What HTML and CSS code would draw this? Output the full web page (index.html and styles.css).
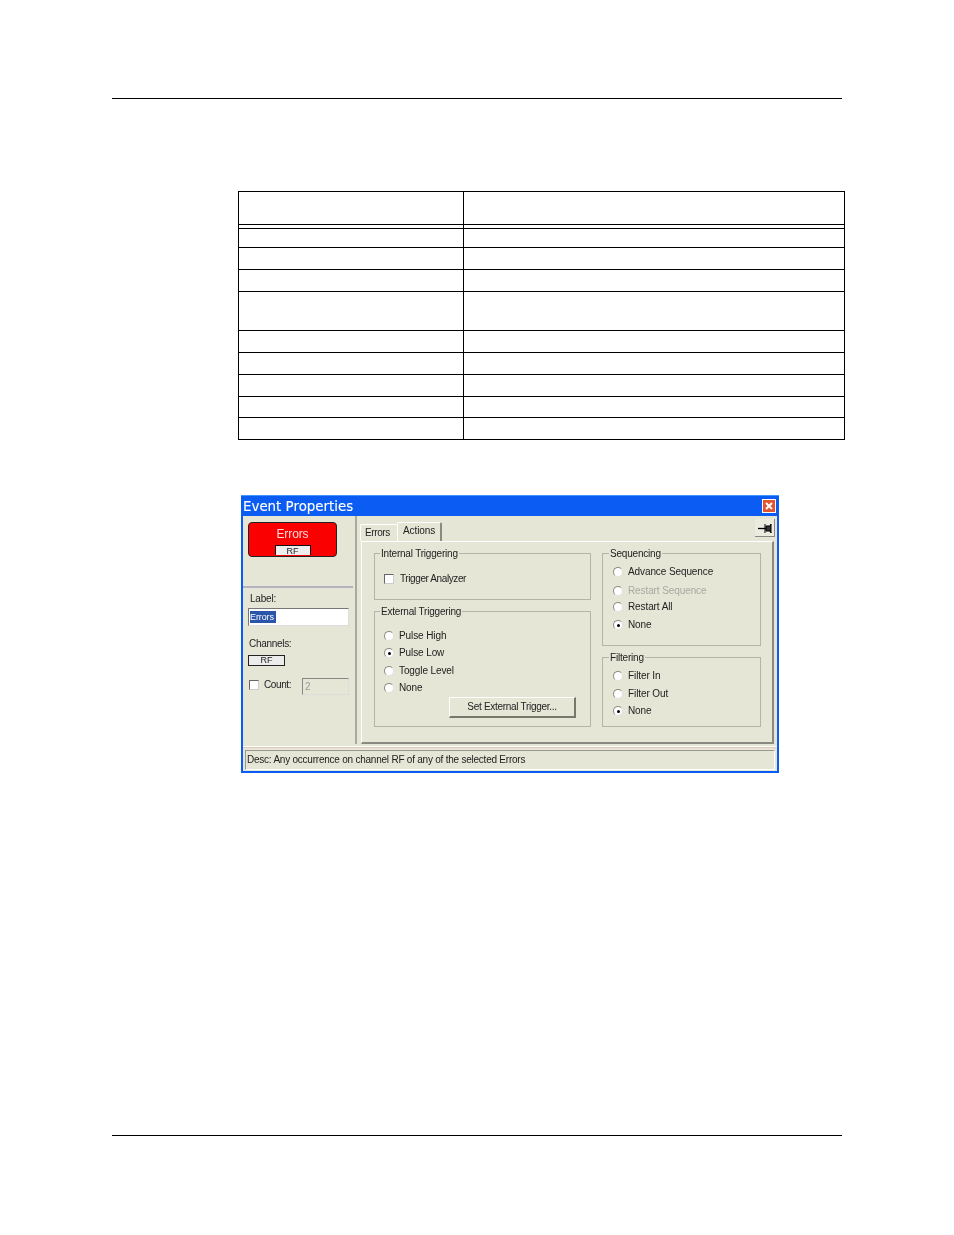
FILE: index.html
```html
<!DOCTYPE html>
<html lang="en">
<head>
<meta charset="utf-8">
<title>Event Properties</title>
<link rel="stylesheet" href="styles.css">
</head>
<body>
<div class="page">
  <hr class="rule">
  <table class="spec">
    <colgroup><col class="col-a"><col class="col-b"></colgroup>
    <tr class="h33 head"><td></td><td></td></tr>
    <tr class="h4 spacer"><td></td><td></td></tr>
    <tr class="h19 first"><td></td><td></td></tr>
    <tr class="h22"><td></td><td></td></tr>
    <tr class="h22"><td></td><td></td></tr>
    <tr class="h39"><td></td><td></td></tr>
    <tr class="h22"><td></td><td></td></tr>
    <tr class="h22"><td></td><td></td></tr>
    <tr class="h22"><td></td><td></td></tr>
    <tr class="h21"><td></td><td></td></tr>
    <tr class="h22"><td></td><td></td></tr>
  </table>

  <div class="window">
    <div class="titlebar">
      <span class="title">Event Properties</span>
      <span class="close"><svg viewBox="0 0 14 14" width="14" height="14"><path d="M4 4l6 6M10 4l-6 6" stroke="#fff" stroke-width="2" fill="none"/></svg></span>
    </div>
    <div class="client">
      <div class="main">
        <div class="side">
          <div class="event-btn"><span class="event-name">Errors</span><span class="event-chip">RF</span></div>
          <div class="side-sep"></div>
          <div class="lbl lbl-label">Label:</div>
          <div class="input"><span class="selected">Errors</span></div>
          <div class="lbl lbl-channels">Channels:</div>
          <div class="chan">RF</div>
          <div class="count-row">
            <span class="check count-check"></span>
            <span class="count-label">Count:</span>
            <span class="count-input">2</span>
          </div>
        </div>
        <div class="right">
          <div class="tabstrip">
            <span class="tab tab-errors">Errors</span>
            <span class="tab tab-active">Actions</span>
            <span class="pin"><svg viewBox="0 0 20 18" width="20" height="18"><path d="M3 9.5h8" stroke="#000" stroke-width="1.3" fill="none"/><path d="M10 5v9M11 7h4l1-2v9l-1-2h-4z" stroke="#000" fill="#333"/></svg></span>
          </div>
          <div class="pane">
            <div class="col col-left">
              <div class="group g-internal">
                <span class="legend">Internal Triggering</span>
                <div class="row row-check"><span class="check"></span><span class="tight">Trigger Analyzer</span></div>
              </div>
              <div class="group g-external">
                <span class="legend">External Triggering</span>
                <div class="row first-ext"><span class="radio"></span><span>Pulse High</span></div>
                <div class="row gap-5"><span class="radio on"></span><span>Pulse Low</span></div>
                <div class="row gap-6"><span class="radio"></span><span>Toggle Level</span></div>
                <div class="row gap-5"><span class="radio"></span><span>None</span></div>
                <div class="btn">Set External Trigger...</div>
              </div>
            </div>
            <div class="col col-right">
              <div class="group g-seq">
                <span class="legend">Sequencing</span>
                <div class="row first-seq"><span class="radio"></span><span>Advance Sequence</span></div>
                <div class="row gap-7 disabled"><span class="radio"></span><span>Restart Sequence</span></div>
                <div class="row gap-4"><span class="radio"></span><span>Restart All</span></div>
                <div class="row gap-6"><span class="radio on"></span><span>None</span></div>
              </div>
              <div class="group g-filter">
                <span class="legend">Filtering</span>
                <div class="row first-seq"><span class="radio"></span><span>Filter In</span></div>
                <div class="row gap-6"><span class="radio"></span><span>Filter Out</span></div>
                <div class="row gap-5"><span class="radio on"></span><span>None</span></div>
              </div>
            </div>
          </div>
        </div>
      </div>
      <div class="status-sep"></div>
      <div class="status">Desc: Any occurrence on channel RF of any of the selected Errors</div>
    </div>
  </div>
  <hr class="rule rule-bottom">
</div>
</body>
</html>
```
FILE: styles.css
```css
html, body { margin: 0; padding: 0; background: #fff; }
.page { padding: 98px 0 0 112px; width: 730px; height: 1137px; }
.rule { margin: 0; border: 0; height: 1px; background: #000; width: 730px; }
.rule-bottom { margin-top: 362px; }

.spec { border-collapse: collapse; table-layout: fixed; width: 606px; margin: 92px 0 0 126px; }
.col-a { width: 225px; }
.col-b { width: 381px; }
.spec td { border: 1px solid #000; padding: 0; font-size: 0; line-height: 0; }
.spec .spacer td { border-top: 1px solid #000; border-bottom: 1px solid #000; }
.h33 td { height: 32px; }
.h4 td { height: 3px; }
.h19 td { height: 18px; }
.h22 td { height: 21px; }
.h21 td { height: 20px; }
.h39 td { height: 38px; }

.window { width: 538px; height: 278px; margin: 55px 0 0 129px; box-sizing: border-box; background: #0a5cf2; display: flex; flex-direction: column; font: 10px "Liberation Sans", Arial, sans-serif; color: #222; filter: blur(0.45px); letter-spacing: -0.1px; }
.titlebar { height: 21px; flex: none; display: flex; align-items: center; justify-content: space-between; padding: 0 3px 0 2px; border-top: 1px solid #3f97ff; box-sizing: border-box; }
.title { font: 13.4px "DejaVu Sans", sans-serif; color: #fff; letter-spacing: 0; -webkit-text-stroke: 0.1px #fff; }
.close { width: 14px; height: 14px; background: #e2532f; border: 1px solid #fff; box-sizing: border-box; display: flex; align-items: center; justify-content: center; }
.close svg { flex: none; }
.client { flex: 1; margin: 0 2px 2px; background: #e6e6d7; display: flex; flex-direction: column; }

.main { height: 228px; display: flex; flex: none; }
.side { width: 114px; flex: none; box-sizing: border-box; border-right: 2px solid #a9a99c; padding: 6px 0 0 5px; }
.event-btn { width: 89px; height: 35px; box-sizing: border-box; background: #fb0000; border: 1px solid #222; border-radius: 4px; display: flex; flex-direction: column; align-items: center; color: #fff; }
.event-name { font-size: 12px; line-height: 13px; margin-top: 5px; color: #fdd; }
.event-chip { width: 36px; height: 10px; margin-top: 4px; background: #eee; border: 1px solid #111; border-bottom: 0; box-sizing: border-box; color: #222; font-size: 9px; line-height: 10px; text-align: center; }
.side-sep { height: 2px; background: #b3b3c0; margin: 29px 0 0 -5px; width: 110px; }
.lbl { font-size: 10px; line-height: 12px; letter-spacing: -0.2px; }
.lbl-label { margin: 5px 0 0 2px; }
.input { width: 101px; height: 18px; margin-top: 3px; box-sizing: border-box; background: #fff; border: 1px solid #777; border-right-color: #ddd; border-bottom-color: #ddd; padding: 2px 1px; line-height: 12px; font-size: 9px; }
.selected { background: #2b55a8; color: #fff; display: inline-block; width: 26px; }
.lbl-channels { margin: 12px 0 0 1px; letter-spacing: -0.3px; }
.chan { width: 37px; height: 11px; margin-top: 5px; box-sizing: border-box; background: #ececec; border: 1px solid #222; text-align: center; font-size: 9px; line-height: 9px; }
.count-row { display: flex; align-items: center; margin: 12px 0 0 1px; height: 17px; }
.check { width: 10px; height: 10px; flex: none; box-sizing: border-box; background: #fff; border: 1px solid #666; border-right-color: #ccc; border-bottom-color: #ccc; }
.count-check { margin-bottom: 4px; }
.count-label { margin: 0 0 4px 5px; font-size: 10px; letter-spacing: -0.4px; }
.count-input { margin-left: 11px; width: 47px; height: 17px; box-sizing: border-box; border: 1px solid #888; border-right-color: #ddd; border-bottom-color: #ddd; color: #999; padding-left: 2px; line-height: 15px; }

.right { flex: 1; display: flex; flex-direction: column; min-width: 0; }
.tabstrip { height: 25px; flex: none; display: flex; align-items: flex-end; position: relative; padding-left: 3px; }
.tab { box-sizing: border-box; border: 1px solid #fff; border-bottom: 0; border-radius: 2px 2px 0 0; }
.tab-errors { width: 37px; height: 17px; line-height: 16px; padding-left: 4px; border-right: 0; letter-spacing: -0.4px; }
.tab-active { width: 45px; height: 19px; line-height: 16px; padding-left: 5px; border-right: 2px solid #8a8a80; }
.pin { position: absolute; right: 2px; top: 3px; width: 20px; height: 18px; background: #ecebe0; border-right: 1px solid #888; border-bottom: 1px solid #888; box-sizing: border-box; }
.pin svg { display: block; }
.pane { width: 413px; height: 203px; margin-left: 4px; box-sizing: border-box; border: 1px solid #fff; border-right: 2px solid #8a8a80; border-bottom: 2px solid #8a8a80; padding: 11px 0 0 12px; display: flex; gap: 11px; }
.col { display: flex; flex-direction: column; gap: 11px; }
.col-left { width: 217px; }
.col-right { width: 159px; }
.group { position: relative; box-sizing: border-box; border: 1px solid #b5b5a6; }
.g-internal { height: 47px; }
.g-external { height: 116px; }
.g-seq { height: 93px; }
.g-filter { height: 70px; }
.legend { position: absolute; left: 6px; top: -6px; padding: 0 1px; background: #e6e6d7; line-height: 12px; font-size: 10px; letter-spacing: -0.2px; }
.col-left .legend { left: 5px; }
.row { display: flex; align-items: center; height: 12px; line-height: 12px; padding-left: 9px; gap: 5px; }
.row-check { margin-top: 19px; gap: 6px; }
.first-ext { margin-top: 18px; }
.first-seq { margin-top: 12px; }
.g-seq .row, .g-filter .row { padding-left: 10px; }
.tight { letter-spacing: -0.4px; }
.gap-4 { margin-top: 4px; }
.gap-5 { margin-top: 5px; }
.gap-6 { margin-top: 6px; }
.gap-7 { margin-top: 7px; }
.disabled { color: #a8a8a0; }
.radio { width: 10px; height: 10px; flex: none; box-sizing: border-box; border-radius: 50%; background: #fff; border: 1px solid #8a8a80; border-right-color: #e0e0e0; border-bottom-color: #e0e0e0; position: relative; }
.radio.on::after { content: ""; position: absolute; left: 2.5px; top: 2.5px; width: 3.5px; height: 3.5px; border-radius: 50%; background: #000; }
.btn { width: 127px; height: 21px; margin: 3px 0 0 74px; box-sizing: border-box; background: #e6e6d7; border: 1px solid #fff; border-right: 2px solid #77776c; border-bottom: 2px solid #77776c; text-align: center; line-height: 18px; letter-spacing: -0.3px; }

.status-sep { margin: 2px 0 0; background: #e4c8bc; border-top: 1px solid #fff; height: 1px; }
.status { margin: 2px 2px 0; height: 20px; box-sizing: border-box; border: 1px solid #fff; border-top-color: #9a9a8e; border-left-color: #9a9a8e; padding-left: 1px; line-height: 17px; letter-spacing: -0.23px; }
```
